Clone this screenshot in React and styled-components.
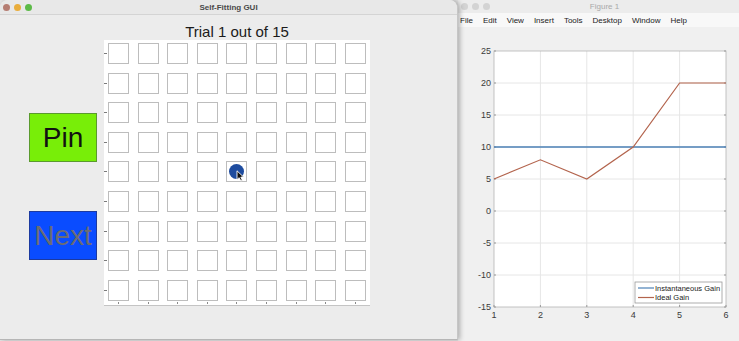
import React from "react";
import styled, { createGlobalStyle } from "styled-components";

const GlobalStyle = createGlobalStyle`
  html, body {
    margin: 0;
    padding: 0;
    overflow: hidden;
    background: #e6e6e6;
  }
  body {
    font-family: "Liberation Sans", Arial, sans-serif;
  }
`;

const ROWS = 9;
const COLS = 9;
const PIN_ROW = 4;
const PIN_COL = 4;

const yTicks = [25, 20, 15, 10, 5, 0, -5, -10, -15];
const xTicks = [1, 2, 3, 4, 5, 6];
const idealGain = [5, 8, 5, 10, 20, 20];
const instGain = [10, 10, 10, 10, 10, 10];

// chart geometry (inside the figure canvas)
const AX_LEFT = 36;
const AX_RIGHT = 268;
const AX_TOP = 24;
const AX_BOTTOM = 280;
const sx = (v) => AX_LEFT + ((v - 1) * (AX_RIGHT - AX_LEFT)) / 5;
const sy = (v) => AX_TOP + ((25 - v) * (AX_BOTTOM - AX_TOP)) / 40;

function Cursor() {
    return (
        <CursorSvg width="9" height="12" viewBox="0 0 9 12">
            <path
                d="M1 0.8 L1 9.6 L3.2 7.7 L4.8 11 L6.3 10.3 L4.8 7.1 L7.6 7.1 Z"
                fill="#111"
                stroke="#fff"
                strokeWidth="0.9"
                strokeLinejoin="round"
            />
        </CursorSvg>
    );
}

function GainChart() {
    const idealPts = idealGain.map((v, i) => `${sx(i + 1)},${sy(v)}`).join(" ");
    const instPts = instGain.map((v, i) => `${sx(i + 1)},${sy(v)}`).join(" ");
    return (
        <ChartSvg width="281" height="314" viewBox="0 0 281 314">
            <rect
                x={AX_LEFT}
                y={AX_TOP}
                width={AX_RIGHT - AX_LEFT}
                height={AX_BOTTOM - AX_TOP}
                fill="#fff"
            />
            {xTicks.slice(1, -1).map((t) => (
                <line
                    key={"gx" + t}
                    x1={sx(t)}
                    x2={sx(t)}
                    y1={AX_TOP}
                    y2={AX_BOTTOM}
                    stroke="#e6e6e6"
                    strokeWidth="1"
                />
            ))}
            {yTicks.slice(1, -1).map((t) => (
                <line
                    key={"gy" + t}
                    x1={AX_LEFT}
                    x2={AX_RIGHT}
                    y1={sy(t)}
                    y2={sy(t)}
                    stroke="#e6e6e6"
                    strokeWidth="1"
                />
            ))}
            <rect
                x={AX_LEFT}
                y={AX_TOP}
                width={AX_RIGHT - AX_LEFT}
                height={AX_BOTTOM - AX_TOP}
                fill="none"
                stroke="#b4b4b4"
                strokeWidth="0.8"
            />
            {yTicks.map((t) => (
                <g key={"ty" + t}>
                    <line x1={AX_LEFT} x2={AX_LEFT + 2} y1={sy(t)} y2={sy(t)} stroke="#999" />
                    <line x1={AX_RIGHT - 2} x2={AX_RIGHT} y1={sy(t)} y2={sy(t)} stroke="#999" />
                    <AxisText x={AX_LEFT - 3} y={sy(t) + 3} textAnchor="end">
                        {t}
                    </AxisText>
                </g>
            ))}
            {xTicks.map((t) => (
                <g key={"tx" + t}>
                    <line x1={sx(t)} x2={sx(t)} y1={AX_BOTTOM - 2} y2={AX_BOTTOM} stroke="#999" />
                    <AxisText x={sx(t)} y={AX_BOTTOM + 11} textAnchor="middle">
                        {t}
                    </AxisText>
                </g>
            ))}
            <polyline points={instPts} fill="none" stroke="#4b80b6" strokeWidth="1.6" />
            <polyline points={idealPts} fill="none" stroke="#b3644d" strokeWidth="1.2" />
            <rect x="177" y="255" width="87" height="21" fill="#fff" stroke="#9a9a9a" strokeWidth="0.8" />
            <line x1="180" x2="196" y1="261" y2="261" stroke="#4b80b6" strokeWidth="1.2" />
            <line x1="180" x2="196" y1="270.5" y2="270.5" stroke="#b3644d" strokeWidth="1.2" />
            <LegendText x="197" y="263.8">Instantaneous Gain</LegendText>
            <LegendText x="197" y="273.3">Ideal Gain</LegendText>
        </ChartSvg>
    );
}

export default function App() {
    const cells = [];
    for (let r = 0; r < ROWS; r++) {
        for (let c = 0; c < COLS; c++) {
            const pinned = r === PIN_ROW && c === PIN_COL;
            cells.push(
                <Cell key={r + "-" + c}>
                    {pinned && (
                        <>
                            <Marker />
                            <Cursor />
                        </>
                    )}
                </Cell>
            );
        }
    }

    return (
        <>
            <GlobalStyle />
            <Desktop>
                <LeftWindow>
                    <TitleBar>
                        <Lights>
                            <Light color="#b57d72" />
                            <Light color="#e9ad3c" />
                            <Light color="#5cba47" />
                        </Lights>
                        <WindowTitle>Self-Fitting GUI</WindowTitle>
                        <span />
                    </TitleBar>
                    <GuiBody>
                        <ButtonColumn>
                            <BigButton bg="#78ee08" fg="#111" edge="#5a9a2e">
                                Pin
                            </BigButton>
                            <BigButton bg="#0a4cff" fg="#6c6c72" edge="#1c3aa0">
                                Next
                            </BigButton>
                        </ButtonColumn>
                        <PlotColumn>
                            <TrialTitle>Trial 1 out of 15</TrialTitle>
                            <GridAxes>{cells}</GridAxes>
                        </PlotColumn>
                    </GuiBody>
                </LeftWindow>
                <RightWindow>
                    <FigureTitleBar>
                        <Lights>
                            <Light color="#d3d3d3" />
                            <Light color="#d3d3d3" />
                            <Light color="#d3d3d3" />
                        </Lights>
                        <FigureTitle>Figure 1</FigureTitle>
                        <span />
                    </FigureTitleBar>
                    <MenuBar>
                        {["File", "Edit", "View", "Insert", "Tools", "Desktop", "Window", "Help"].map(
                            (m) => (
                                <MenuItem key={m}>{m}</MenuItem>
                            )
                        )}
                    </MenuBar>
                    <FigureCanvas>
                        <GainChart />
                    </FigureCanvas>
                </RightWindow>
            </Desktop>
        </>
    );
}

const Desktop = styled.div`
    display: flex;
    width: 739px;
    height: 341px;
    overflow: hidden;
`;
const LeftWindow = styled.section`
    width: 458px;
    height: 340px;
    flex: none;
    display: flex;
    flex-direction: column;
    box-sizing: border-box;
    background: #ececec;
    border-right: 1px solid #c6c6c6;
    border-bottom: 1px solid #b6b6b6;
    border-radius: 8px 8px 0 0;
    box-shadow: 2px 0 5px rgba(0, 0, 0, 0.28);
    position: relative;
    z-index: 1;
`;
const TitleBar = styled.div`
    height: 14px;
    flex: none;
    display: grid;
    grid-template-columns: 1fr auto 1fr;
    align-items: center;
    background: #e8e8e8;
    border-bottom: 1px solid #d4d4d4;
    border-radius: 8px 8px 0 0;
`;
const Lights = styled.div`
    display: flex;
    gap: 4px;
    padding-left: 3px;
`;
const Light = styled.span`
    width: 7px;
    height: 7px;
    border-radius: 50%;
    background: ${(p) => p.color};
`;
const WindowTitle = styled.div`
    font-size: 8px;
    font-weight: bold;
    color: #4a4a4a;
`;
const GuiBody = styled.div`
    flex: 1;
    display: flex;
`;
const ButtonColumn = styled.div`
    width: 104px;
    flex: none;
    box-sizing: border-box;
    padding: 98px 0 0 29px;
    display: flex;
    flex-direction: column;
    gap: 49px;
`;
const BigButton = styled.div`
    width: 68px;
    height: 49px;
    box-sizing: border-box;
    display: flex;
    align-items: center;
    justify-content: center;
    background: ${(p) => p.bg};
    color: ${(p) => p.fg};
    border: 1px solid ${(p) => p.edge};
    font-size: 28px;
    line-height: 1;
`;
const PlotColumn = styled.div`
    width: 266px;
    display: flex;
    flex-direction: column;
`;
const TrialTitle = styled.div`
    height: 25px;
    box-sizing: border-box;
    padding-top: 8px;
    text-align: center;
    font-size: 15px;
    line-height: 17px;
    color: #1a1a1a;
`;
const GridAxes = styled.div`
    width: 266px;
    height: 265px;
    box-sizing: border-box;
    background: #fff;
    box-shadow: 0 1px 0 #c4c4c4;
    padding: 3px 0 0 4px;
    display: grid;
    grid-template-columns: repeat(${COLS}, 21px);
    grid-template-rows: repeat(${ROWS}, 21px);
    gap: 8.6px;
`;
const Cell = styled.div`
    position: relative;
    box-sizing: border-box;
    border: 1px solid #bdbdbd;
    display: flex;
    align-items: center;
    justify-content: center;

    &:nth-child(${COLS}n + 1)::before {
        content: "";
        position: absolute;
        left: -5px;
        top: 9px;
        width: 3px;
        height: 1px;
        background: #7a7a7a;
    }
    &:nth-child(n + ${COLS * (ROWS - 1) + 1})::after {
        content: "";
        position: absolute;
        left: 9px;
        bottom: -4px;
        width: 1px;
        height: 2px;
        background: #8a8a8a;
    }
`;
const Marker = styled.span`
    width: 15px;
    height: 15px;
    border-radius: 50%;
    background: #1e4c9f;
`;
const CursorSvg = styled.svg`
    position: absolute;
    left: 9px;
    top: 8px;
`;
const RightWindow = styled.section`
    flex: 1;
    height: 341px;
    display: flex;
    flex-direction: column;
    background: #f0f0f0;
`;
const FigureTitleBar = styled.div`
    height: 13px;
    flex: none;
    display: grid;
    grid-template-columns: 1fr auto 1fr;
    align-items: center;
    background: #ececec;
`;
const FigureTitle = styled.div`
    font-size: 8px;
    color: #a9a9a9;
    padding-left: 12px;
`;
const MenuBar = styled.div`
    height: 14px;
    flex: none;
    display: flex;
    align-items: center;
    gap: 10px;
    padding-left: 2px;
    background: #f8f8f8;
`;
const MenuItem = styled.span`
    font-size: 8px;
    color: #222;
`;
const FigureCanvas = styled.div`
    flex: 1;
`;
const ChartSvg = styled.svg`
    display: block;
`;
const AxisText = styled.text`
    font-family: "Liberation Sans", Arial, sans-serif;
    font-size: 9px;
    fill: #3a3a3a;
`;
const LegendText = styled.text`
    font-family: "Liberation Sans", Arial, sans-serif;
    font-size: 7.5px;
    fill: #222;
`;
